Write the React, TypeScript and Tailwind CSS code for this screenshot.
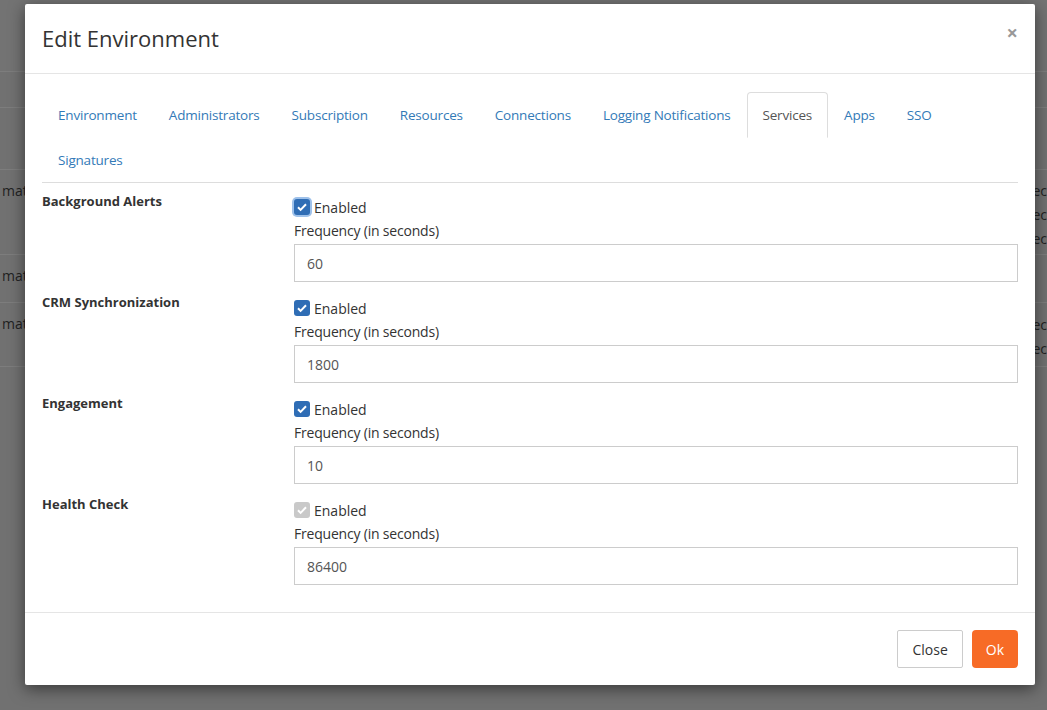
import React from "react";

const tabs = ["Environment", "Administrators", "Subscription", "Resources", "Connections", "Logging Notifications", "Services", "Apps", "SSO", "Signatures"];

const services = [
  { name: "Background Alerts", value: "60", disabled: false, focus: true },
  { name: "CRM Synchronization", value: "1800", disabled: false, focus: false },
  { name: "Engagement", value: "10", disabled: false, focus: false },
  { name: "Health Check", value: "86400", disabled: true, focus: false },
];

function Check({ disabled, focus }: { disabled: boolean; focus: boolean }) {
  return (
    <span
      className={`flex h-[16px] w-[16px] items-center justify-center rounded-[3px] ${
        disabled ? "bg-[#c9c9c9]" : "bg-[#2f6db5]"
      } ${focus ? "ring-2 ring-[#9ec1ea]" : ""}`}
    >
      <svg width="12" height="12" viewBox="0 0 12 12">
        <path d="M2 6.3l2.6 2.6L10 3.3" fill="none" stroke="white" strokeWidth="2" />
      </svg>
    </span>
  );
}

export default function App() {
  return (
    <div className="relative h-[710px] w-[1047px] overflow-hidden bg-[#717171] text-[14px] text-[#333]" style={{ fontFamily: '"Open Sans", sans-serif' }}>
      {/* page behind overlay */}
      <div className="absolute inset-0 text-[#222]">
        <div className="h-[72px] border-b border-[#7d7d7d] bg-[#737373]" />
        <div className="h-[36px] border-b border-[#7d7d7d]" />
        <div className="h-[62px] border-b border-[#7d7d7d]" />
        <div className="h-[85px] border-b border-[#7d7d7d] pt-[10px] pl-[2px]">mati</div>
        <div className="h-[48px] border-b border-[#7d7d7d] pt-[10px] pl-[2px]">mati</div>
        <div className="h-[64px] border-b border-[#7d7d7d] pt-[10px] pl-[2px]">mati</div>
        <div className="absolute right-0 top-[180px] flex flex-col gap-[2px] leading-[22px]"><span>ec</span><span>ec</span><span>ec</span></div>
        <div className="absolute right-0 top-[314px] flex flex-col gap-[2px] leading-[22px]"><span>ec</span><span>ec</span></div>
      </div>

      <div className="absolute left-[25px] top-[4px] w-[1010px] rounded-[2px] bg-white shadow-[0_4px_16px_rgba(0,0,0,0.5)]">
        <div className="relative flex h-[70px] items-center border-b border-[#e5e5e5] px-[17px]">
          <h2 className="text-[22px] text-[#333]">Edit Environment</h2>
          <span className="absolute right-[17px] top-[14px] text-[20px] font-bold text-[#999]">×</span>
        </div>

        <div className="px-[17px] pt-[18px]">
          <div className="flex flex-wrap border-b border-[#ddd] text-[13.5px]">
            {tabs.map((t) => (
              <div
                key={t}
                className={`mb-[-1px] h-[46px] px-[15px] leading-[44px] tracking-[-0.2px] ${
                  t === "Services"
                    ? "rounded-t-[4px] border border-[#ddd] border-b-white bg-white text-[#555]"
                    : "border border-transparent text-[#337ab7]"
                }`}
              >
                {t}
              </div>
            ))}
          </div>

          <div className="pt-[9px] pb-[16px]">
            {services.map((s) => (
              <div key={s.name} className="flex h-[101px]">
                <div className="w-[252px] text-[13px] font-bold text-[#333]">{s.name}</div>
                <div className="flex-1">
                  <div className="flex h-[27px] items-center gap-[4px] pt-[3px]">
                    <Check disabled={s.disabled} focus={s.focus} />
                    <span>Enabled</span>
                  </div>
                  <div className="pt-[2px] pb-[4px] leading-[19px] tracking-[-0.2px]">Frequency (in seconds)</div>
                  <div className="flex h-[38px] items-center border border-[#ccc] px-[12px] text-[#555]">{s.value}</div>
                </div>
              </div>
            ))}
          </div>
        </div>

        <div className="flex h-[73px] items-center justify-end gap-[9px] border-t border-[#e5e5e5] px-[17px]">
          <button className="h-[38px] rounded-[2px] border border-[#ccc] bg-white px-[14px] text-[#333]">Close</button>
          <button className="h-[38px] rounded-[4px] bg-[#f76b26] px-[14px] text-white">Ok</button>
        </div>
      </div>
    </div>
  );
}
